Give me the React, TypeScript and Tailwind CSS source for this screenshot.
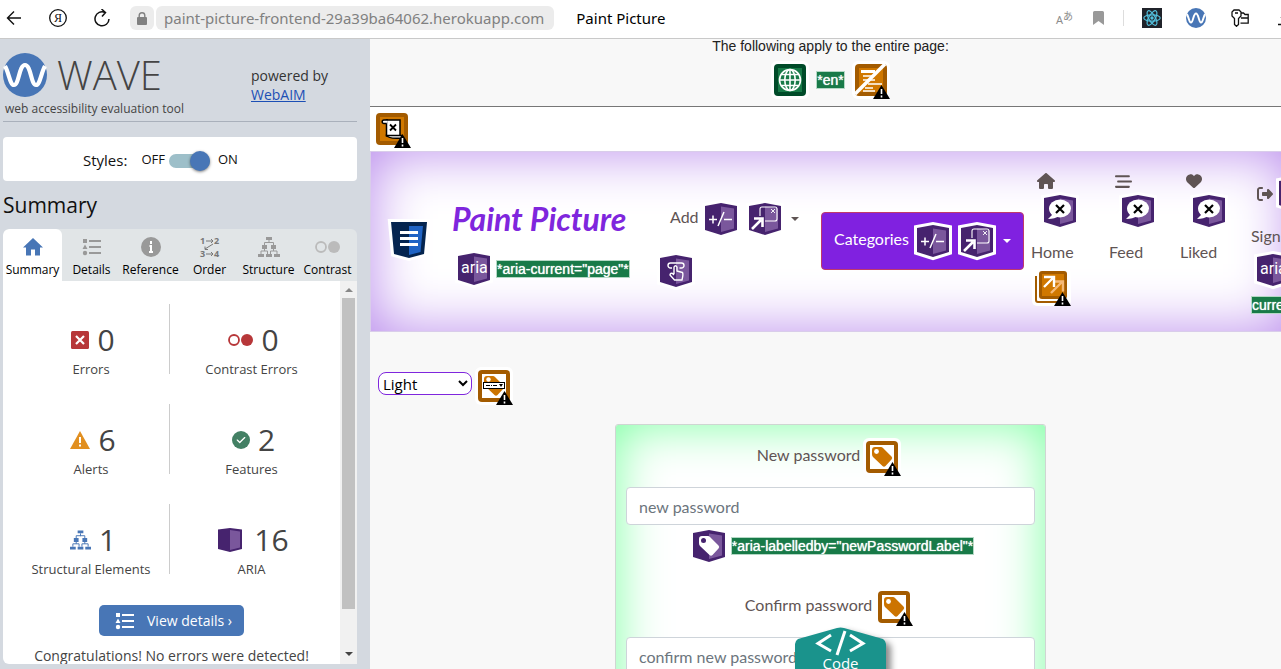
import React from "react";
import { FaHouse, FaBarsStaggered, FaHeart, FaRightFromBracket, FaCheck } from "react-icons/fa6";

type Kids = { children?: React.ReactNode };

function WaveMark({ className }: { className: string }) {
  return (
    <svg viewBox="0 0 44 44" className={className} aria-hidden="true">
      <circle cx="22" cy="22" r="22" fill="#4876b6" />
      <path
        d="M2 13 C6 20 7 32 11 32 C16 32 16 12 22 12 C28 12 28 32 33 32 C37 32 38 20 42 13"
        fill="none"
        stroke="#fff"
        strokeWidth="4.2"
      />
    </svg>
  );
}

/* Purple box used for every ARIA marker */
function Cube({ children }: Kids) {
  return (
    <svg viewBox="0 0 32 32" className="size-8 shrink-0 overflow-visible" aria-hidden="true">
      <path d="M0 3 16 0 32 3V27L16 32 0 27Z" fill="#fff" stroke="#fff" strokeWidth="6" strokeLinejoin="miter" />
      <path d="M0 3 16 0 32 3V27L16 32 0 27Z" fill="#46236e" />
      <path d="M16 3.5 29 5.5V25.5L16 29Z" fill="#7a579c" />
      {children}
    </svg>
  );
}

const AriaCube = () => (
  <Cube>
    <text x="3" y="20" fontSize="16" fill="#fff" fontFamily="Roboto, sans-serif">
      aria
    </text>
  </Cube>
);

const ExpandCube = () => (
  <Cube>
    <path d="M4 16.5h8M8 12.5v8M19 9 13 23M19 16.5h8" stroke="#fff" strokeWidth="1.5" fill="none" />
  </Cube>
);

const PopupCube = () => (
  <Cube>
    <path d="M11 13V6Q11 4 13 4H26Q28 4 28 6V16Q28 18 26 18H16" fill="none" stroke="#fff" strokeWidth="1.1" />
    <path d="M22 6l4 4M26 6l-4 4" stroke="#fff" strokeWidth=".9" />
    <path d="M3 26 12 17M5 15.5H13.5V24" stroke="#fff" strokeWidth="2.6" fill="none" />
  </Cube>
);

const HandCube = () => (
  <Cube>
    <path
      d="M12 13H10.500A2.500 2.500 0 0 1 10.500 8H21.500A2.500 2.500 0 0 1 21.500 13H19.500"
      fill="none"
      stroke="#fff"
      strokeWidth="1.4"
    />
    <path
      d="M14 19V12Q15.500 9.500 17 12V16L22.500 17.500Q23.500 19 22 25H14.500L10 20Q10.500 17.500 12.500 18.500L14 20"
      fill="none"
      stroke="#fff"
      strokeWidth="1.4"
      strokeLinejoin="round"
    />
  </Cube>
);

const HiddenCube = () => (
  <Cube>
    <ellipse cx="16" cy="13.500" rx="11" ry="9" fill="#fff" />
    <path d="M6 16 8 20 4 24Q11 24 15 21Z" fill="#fff" />
    <path d="M12 10l8 8M20 10l-8 8" stroke="#000" strokeWidth="2.2" />
  </Cube>
);

const tagPath = "M6 9Q6 6 9 6H15Q16 6 17 7L25.500 15.500Q27 17 25.500 18.500L19.500 25Q18 26.500 16.500 25L7 16Q6 15 6 13Z";

const TagCube = () => (
  <Cube>
    <path d={tagPath} fill="#fff" />
    <circle cx="10.500" cy="10.500" r="2.500" fill="#46236e" />
  </Cube>
);

/* Orange alert marker with the black warning triangle on its corner */
function Alert({ fill, children }: Kids & { fill: string }) {
  return (
    <svg viewBox="0 0 32 32" className="size-8 shrink-0 overflow-visible" aria-hidden="true">
      <rect x="-3" y="-3" width="38" height="38" rx="6" fill="#fff" />
      <rect width="32" height="32" rx="4" fill="#a35b00" />
      <rect x="4" y="4" width="24" height="24" fill={fill} />
      {children}
      <path d="M26.500 21 35 35H18Z" fill="#000" />
      <path d="M26.500 25v5M26.500 31.500v2" stroke="#fff" strokeWidth="1.600" />
    </svg>
  );
}

const TagAlert = () => (
  <Alert fill="#fff">
    <path d={tagPath} fill="#cc7400" />
    <circle cx="10.500" cy="10.500" r="2.400" fill="#fff" />
  </Alert>
);

const SelectAlert = () => (
  <Alert fill="#fff">
    <path d={tagPath} fill="#cc7400" />
    <circle cx="10.500" cy="9.500" r="2.200" fill="#fff" />
    <rect x="5.500" y="12.500" width="21" height="6" fill="#fff" stroke="#000" />
    <path d="M8 15.500h12" stroke="#000" strokeDasharray="4 1 1 1" />
    <path d="M21 14h4l-2 3z" />
  </Alert>
);

const Mark = ({ children }: Kids) => (
  <span className="whitespace-nowrap border border-[#b4d8c5] bg-[#187a48] font-['Liberation_Sans',Arial,sans-serif] text-sm leading-4 text-white [text-shadow:0_0_1px_#fff]">
    {children}
  </span>
);

const ListIcon = ({ className }: { className: string }) => (
  <svg viewBox="0 0 20 18" className={className} aria-hidden="true" fill="currentColor">
    <path d="M1 1h4v4H1zM3 6.500 5.500 11H.5z" />
    <circle cx="3" cy="15" r="2.200" />
    <path d="M7 2h12v2H7zM7 8h12v2H7zM7 14h12v2H7z" />
  </svg>
);

const TreeIcon = ({ className }: { className: string }) => (
  <svg viewBox="0 0 22 20" className={className} aria-hidden="true" fill="currentColor">
    <path d="M8 0h6v3H8zM4 8h5v4H4zM13 8h5v4h-5zM0 17h6v3H0zM8 17h6v3H8zM16 17h6v3h-6z" />
    <path d="M11 3v3M6.500 8V5.500h9V8M6.500 12v2M15.500 12v2M3 17v-3h6.500v3M12.500 17v-3H19v3" fill="none" stroke="currentColor" />
  </svg>
);

const HomeIcon = () => (
  <svg viewBox="0 0 20 18" className="h-[18px] w-5" fill="#4876b6" aria-hidden="true">
    <path d="M10 0 20 9.500H17V17.500H12V11.500H8V17.500H3V9.500H0Z" />
  </svg>
);

const InfoIcon = () => (
  <svg viewBox="0 0 20 20" className="size-5" aria-hidden="true">
    <circle cx="10" cy="10" r="10" fill="#999" />
    <path d="M10 4v3M8.500 9H10v5.500M8 15h4" stroke="#fff" strokeWidth="2" fill="none" />
  </svg>
);

const OrderIcon = () => (
  <svg viewBox="0 0 20 20" className="size-5 overflow-visible" aria-hidden="true" fill="#777">
    <g fontSize="9" fontWeight="700" fontFamily="Open Sans, sans-serif">
      <text x="0" y="7">1</text>
      <text x="14" y="7">2</text>
      <text x="0" y="20">3</text>
      <text x="14" y="20">4</text>
    </g>
    <path d="M6 4h7M11 2l2 2-2 2M6 17h7M11 15l2 2-2 2M13 7 5 12M5 9.500V12.500H8" fill="none" stroke="#777" />
  </svg>
);

const CirclesIcon = ({ className }: { className: string }) => (
  <svg viewBox="0 0 25 12" className={className} aria-hidden="true">
    <circle cx="6" cy="6" r="5" fill="none" stroke="currentColor" strokeWidth="1.800" />
    <circle cx="19" cy="6" r="6" fill="currentColor" />
  </svg>
);

const ErrorIcon = () => (
  <svg viewBox="0 0 18 18" className="size-[18px]" aria-hidden="true">
    <rect width="18" height="18" rx="1.500" fill="#b73739" />
    <path d="M5 5l8 8M13 5l-8 8" stroke="#fff" strokeWidth="2.200" />
  </svg>
);

const AlertIcon = () => (
  <svg viewBox="0 0 20 18" className="h-[18px] w-5" aria-hidden="true">
    <path d="M10 0 20 18H0Z" fill="#e18f20" />
    <path d="M10 6v6M10 13.500v2" stroke="#fff" strokeWidth="2" />
  </svg>
);

const CheckIcon = () => (
  <span className="flex size-[18px] items-center justify-center rounded-full bg-[#438064]">
    <FaCheck className="size-[10px] text-white" />
  </span>
);

const BoxIcon = () => (
  <svg viewBox="0 0 24 24" className="size-6" aria-hidden="true">
    <path d="M0 1.500 12 0 24 1.500V21L12 24 0 21Z" fill="#46236e" />
    <path d="M12 2 22 3.500V19.500L12 22Z" fill="#7a579c" />
  </svg>
);

const tabs = [
  { label: "Summary", icon: <HomeIcon /> },
  { label: "Details", icon: <ListIcon className="h-[18px] w-5 text-[#999]" /> },
  { label: "Reference", icon: <InfoIcon /> },
  { label: "Order", icon: <OrderIcon /> },
  { label: "Structure", icon: <TreeIcon className="h-5 w-[22px] text-[#999]" /> },
  { label: "Contrast", icon: <CirclesIcon className="h-3 w-[25px] text-[#bbb]" /> },
];

const stats = [
  { label: "Errors", value: 0, icon: <ErrorIcon /> },
  { label: "Contrast Errors", value: 0, icon: <CirclesIcon className="h-3 w-[25px] text-[#b73739]" /> },
  { label: "Alerts", value: 6, icon: <AlertIcon /> },
  { label: "Features", value: 2, icon: <CheckIcon /> },
  { label: "Structural Elements", value: 1, icon: <TreeIcon className="h-5 w-[21px] text-[#4876b6]" /> },
  { label: "ARIA", value: 16, icon: <BoxIcon /> },
];

function BrowserBar() {
  return (
    <header className="flex h-[39px] shrink-0 items-center overflow-hidden border-b border-[#c9c9c9] bg-white pb-0.5 pl-1.5">
      <button aria-label="Back" className="w-4">
        <svg viewBox="0 0 16 16" className="size-4" fill="none" stroke="#111" strokeWidth="1.400">
          <path d="M15 8H1.500M8 1.500 1.500 8 8 14.500" />
        </svg>
      </button>
      <button aria-label="Yandex" className="ml-[27px] w-[18px]">
        <svg viewBox="0 0 18 18" className="size-[18px]">
          <circle cx="9" cy="9" r="8.300" fill="none" stroke="#111" strokeWidth="1.300" />
          <text x="5" y="13" fontSize="12" fontFamily="Liberation Serif, serif" fill="#111">Я</text>
        </svg>
      </button>
      <button aria-label="Reload" className="ml-[26px] w-[18px]">
        <svg viewBox="0 0 18 18" className="size-[18px]" fill="none" stroke="#111" strokeWidth="1.500">
          <path d="M12 3.500A7 7 0 1 0 16 10M8.500 0 12.500 3.500 9 7.500" />
        </svg>
      </button>
      <span className="ml-[19px] flex size-6 shrink-0 items-center justify-center rounded-md bg-[#ececec]">
        <svg viewBox="0 0 10 13" className="h-[13px] w-[10px]" aria-hidden="true">
          <rect y="5" width="10" height="8" rx="1" fill="#808080" />
          <path d="M2.200 6V3.500a2.800 2.800 0 0 1 5.600 0V6" fill="none" stroke="#808080" strokeWidth="1.400" />
        </svg>
      </span>
      <span className="ml-0.5 flex h-6 items-center rounded-md bg-[#ececec] pl-2 pr-2.5 text-[15px] text-[#808080]">
        paint-picture-frontend-29a39ba64062.herokuapp.com
      </span>
      <span className="ml-[22px] text-[15px] text-black">Paint Picture</span>
      <div className="-mr-3 ml-auto flex shrink-0 items-center">
        <span className="flex w-[17px] items-start text-[#8c8c8c]">
          <span className="pt-1 text-[11px] leading-3">A</span>
          <span className="font-['Noto_Sans_CJK_JP',sans-serif] text-[10px] leading-3">あ</span>
        </span>
        <svg viewBox="0 0 11 14" className="ml-5 h-[14px] w-[11px]" fill="#999" aria-hidden="true">
          <path d="M0 1.500Q0 0 1.500 0H9.500Q11 0 11 1.500V14L5.500 10 0 14Z" />
        </svg>
        <span className="ml-[19px] h-4 w-px bg-[#ddd]" />
        <svg viewBox="0 0 20 20" className="ml-[18px] size-5" aria-hidden="true">
          <rect width="20" height="20" fill="#20232a" />
          <circle cx="10" cy="10" r="1.700" fill="#53c1de" />
          <g fill="none" stroke="#53c1de" strokeWidth="1.200">
            <ellipse cx="10" cy="10" rx="8.200" ry="3.200" />
            <ellipse cx="10" cy="10" rx="8.200" ry="3.200" transform="rotate(60 10 10)" />
            <ellipse cx="10" cy="10" rx="8.200" ry="3.200" transform="rotate(120 10 10)" />
          </g>
        </svg>
        <WaveMark className="ml-6 size-5" />
        <svg viewBox="0 0 18 18" className="ml-[25px] size-[18px]" fill="none" stroke="#111" strokeWidth="1.300" aria-hidden="true">
          <path d="M3.500 9.500 1 7V3L3 1H8L10 3V7L7.500 9.500V15.500L5.500 17.300 3.500 15.500ZM4 4h3" />
          <path d="M10 4h2.500l1.500 1.500h3.200V14.200H9.500M10 9h7" />
        </svg>
        <svg viewBox="0 0 16 16" className="ml-[28px] size-4" fill="none" stroke="#111" strokeWidth="1.400" aria-hidden="true">
          <path d="M8 1v9M4 7l4 4 4-4M1 14.500h14" />
        </svg>
      </div>
    </header>
  );
}

function Sidebar() {
  return (
    <aside className="flex w-[370px] shrink-0 flex-col bg-[#d4d9e0] pb-[5px] pl-[3px] pr-[13px] font-['Open_Sans','Noto_Sans',sans-serif]">
      <div className="flex h-[83px] items-start justify-between border-b border-[#a9b0bb] pt-3.5">
        <div>
          <div className="flex h-11 items-center gap-2.5">
            <WaveMark className="size-11" />
            <span className="text-[40px] font-light leading-[44px] text-[#444]">WAVE</span>
          </div>
          <p className="mt-[3px] pl-0.5 text-xs leading-[18px] text-[#444]">web accessibility evaluation tool</p>
        </div>
        <p className="w-[106px] pt-[13px] text-sm leading-[19px] text-[#333]">
          powered by
          <br />
          <a href="#webaim" className="text-[#1c4fb5] underline">
            WebAIM
          </a>
        </p>
      </div>
      <label className="mt-[15px] flex h-11 shrink-0 items-center rounded-[4px] bg-white pl-20 pt-0.5 text-[15px] text-[#111]">
        Styles:
        <span className="ml-3.5 text-[13px]">OFF</span>
        <input type="checkbox" role="switch" defaultChecked className="peer sr-only" />
        <span className="ml-1 mr-2 mt-0.5 flex h-3.5 w-[41px] items-center justify-end rounded-full bg-[#9dbfc9]">
          <span className="size-5 rounded-full bg-[#4876b6] shadow-[0_1px_3px_rgba(0,0,0,0.5)]" />
        </span>
        <span className="text-[13px]">ON</span>
      </label>
      <h2 className="mb-[9px] mt-[9px] text-[21px] leading-[30px] text-[#111]">Summary</h2>
      <div role="tablist" className="grid h-[52px] shrink-0 grid-cols-6 overflow-hidden rounded-t-md bg-[#e1e5e7]">
        {tabs.map((t, i) => (
          <button
            key={t.label}
            role="tab"
            aria-selected={i === 0}
            className="flex flex-col items-center rounded-t-md pt-1.5 text-xs leading-[18px] text-black aria-selected:bg-white"
          >
            <span className="flex h-6 items-center">{t.icon}</span>
            <span className="mt-0.5">{t.label}</span>
          </button>
        ))}
      </div>
      <div className="flex min-h-0 flex-1 overflow-hidden rounded-bl-md bg-white">
        <div className="min-w-0 flex-1 overflow-hidden pt-[23px] text-[#444]">
          <dl className="grid grid-cols-[157fr_163fr] gap-y-[30px] pl-2.5 pr-[7px]">
            {stats.map((s) => (
              <div
                key={s.label}
                className="flex h-[70px] flex-col items-center border-[#ccc] pt-4 odd:border-r"
              >
                <dd className="flex h-10 items-center gap-2 pl-1 text-[30px] leading-10">
                  {s.icon}
                  <span className={s.value === 16 ? "pl-1" : ""}>{s.value}</span>
                </dd>
                <dt className="whitespace-nowrap text-[13px] leading-[18px]">{s.label}</dt>
              </div>
            ))}
          </dl>
          <button className="mx-auto mt-[31px] flex h-[31px] w-[145px] items-center gap-3 rounded-[5px] bg-[#4876b6] pl-4 text-sm text-white">
            <ListIcon className="h-[18px] w-5" />
            View details ›
          </button>
          <p className="mt-2.5 whitespace-nowrap text-center text-sm leading-5">Congratulations! No errors were detected!</p>
        </div>
        <div className="flex w-[17px] flex-col items-center bg-[#f1f1f1]">
          <span className="mt-[7px] border-x-4 border-b-4 border-x-transparent border-b-[#888]" />
          <span className="mt-1.5 h-[311px] w-[13px] bg-[#c1c1c1]" />
          <span className="mb-2 mt-auto border-x-4 border-t-4 border-x-transparent border-t-[#444]" />
        </div>
      </div>
    </aside>
  );
}

const Caret = () => <span className="border-x-4 border-t-4 border-x-transparent border-t-current" />;

function NavItem({ icon, label, children }: Kids & { icon: React.ReactNode; label: string }) {
  return (
    <li className="w-[71px] shrink-0 pt-5 first:w-[78px]">
      <a href={`#${label.toLowerCase()}`} className="flex flex-col">
        <span className="ml-1.5 flex h-[18px] items-center">{icon}</span>
        <span className="ml-[13px] mt-[5px]">
          <HiddenCube />
        </span>
        <span className="mt-[13px] leading-6">{label}</span>
      </a>
      {children}
    </li>
  );
}

function SiteNav() {
  return (
    <nav className="flex h-[181px] items-start border border-[#d9cdea] bg-white pl-5 text-base text-[#5f5454] shadow-[inset_0_0_56px_#b889ec]">
      <svg viewBox="0 0 36 36" className="mt-[70px] size-9 shrink-0 overflow-visible" aria-hidden="true">
        <path d="M0 0H36L33 32 18 36 3 32Z" fill="#fff" stroke="#fff" strokeWidth="6" />
        <path d="M0 0H36L33 32 18 36 3 32Z" fill="#04244f" />
        <path d="M18 4H32L29.500 30 18 33Z" fill="#1f63c4" />
        <path d="M9 9H27V12H9ZM9 15H27V18H9ZM9 21H27V24H9Z" fill="#fff" />
      </svg>
      <div className="ml-[25px] w-[178px] shrink-0 pt-[47px]">
        <a href="#top" className="whitespace-nowrap text-[32px] font-bold italic leading-10 text-[#7f26dd]">
          Paint Picture
        </a>
        <div className="mt-3.5 flex items-center gap-1.5 pl-1.5">
          <AriaCube />
          <Mark>*aria-current="page"*</Mark>
        </div>
      </div>
      <div className="ml-[30px] w-[139px] shrink-0 pt-[51px]">
        <button className="flex items-center pl-2.5">
          <span className="mr-1.5 pb-1">Add</span>
          <ExpandCube />
          <span className="w-3" />
          <PopupCube />
          <span className="w-2.5" />
          <Caret />
        </button>
        <div className="mt-5">
          <HandCube />
        </div>
      </div>
      <button className="ml-[22px] mt-[60px] flex h-[58px] w-[203px] shrink-0 items-center rounded-[4px] border border-[#c0396b] bg-[#8021e0] pl-3 text-white">
        <span className="mr-2 pb-1">Categories</span>
        <ExpandCube />
        <span className="w-3" />
        <PopupCube />
        <span className="w-2.5" />
        <Caret />
      </button>
      <ul className="ml-[7px] flex">
        <NavItem label="Home" icon={<FaHouse className="size-[18px]" />}>
          <div className="mt-[7px] pl-1.5">
            <svg viewBox="0 0 32 32" className="size-8 overflow-visible" aria-hidden="true">
              <rect x="-5" y="-3" width="39" height="38" rx="5" fill="#fff" />
              <path d="M-1 5V29Q-1 31 1 31H26" fill="none" stroke="#a35b00" strokeWidth="2" />
              <rect x="2" y="0" width="28" height="28" rx="3" fill="#a35b00" />
              <rect x="5" y="3" width="22" height="22" fill="#d07800" />
              <path d="M14 22 25 11M16 10.500h10v10" fill="none" stroke="#f5b978" strokeWidth="2.400" />
              <path d="M7 16 16 7M7 6h10v10" fill="none" stroke="#fff" strokeWidth="2.400" />
              <path d="M25.500 21 34 35H17Z" />
              <path d="M25.500 25v5M25.500 31.500v2" stroke="#fff" strokeWidth="1.600" />
            </svg>
          </div>
        </NavItem>
        <NavItem label="Feed" icon={<FaBarsStaggered className="size-[17px]" />} />
        <NavItem label="Liked" icon={<FaHeart className="size-4" />} />
        <li className="w-10 shrink-0 pt-[26px]">
          <a href="#sign-out" className="flex w-20 flex-col">
            <span className="ml-1.5 flex h-8 items-center gap-1.5">
              <FaRightFromBracket className="size-4 shrink-0" />
              <HiddenCube />
            </span>
            <span className="mt-3.5 leading-6">Sign out</span>
          </a>
          <div className="mt-1.5 pl-1.5">
            <AriaCube />
          </div>
          <div className="mt-1.5 leading-6">
            <Mark>current="page"*</Mark>
          </div>
        </li>
      </ul>
    </nav>
  );
}

function Field({ id, label, placeholder, mark }: { id: string; label: string; placeholder: string; mark: string }) {
  return (
    <div className="flex h-[150px] flex-col">
      <div className="flex items-center justify-center gap-1.5 pr-1.5">
        <label htmlFor={id} className="-mt-1 leading-6">
          {label}
        </label>
        <TagAlert />
      </div>
      <input
        id={id}
        type="text"
        placeholder={placeholder}
        className="mt-3.5 h-[38px] shrink-0 rounded-[4px] border border-[#ced4da] bg-white px-3 text-base placeholder:text-[#6c757d]"
      />
      <div className="mt-[5px] flex items-center justify-center gap-1.5 pl-1.5">
        <TagCube />
        <Mark>{mark}</Mark>
      </div>
    </div>
  );
}

function EvaluatedPage() {
  return (
    <main className="relative min-w-0 flex-1 overflow-hidden bg-[#f8f8f8]">
      <div className="-mr-2.5 font-[Lato,sans-serif] text-base text-[#5f5454]">
        <div className="h-[68px] border-b border-[#777] text-center font-['Liberation_Sans',Arial,sans-serif] text-sm leading-4 text-[#222]">
          <p className="leading-[14px]">The following apply to the entire page:</p>
          <div className="mt-[11px] flex items-center justify-center gap-2.5">
            <svg viewBox="0 0 32 32" className="size-8 overflow-visible" aria-hidden="true">
              <rect x="-3" y="-3" width="38" height="38" rx="6" fill="#fff" />
              <rect width="32" height="32" rx="4" fill="#004b29" />
              <rect x="4" y="4" width="24" height="24" fill="#187a48" />
              <g fill="none" stroke="#fff" strokeWidth="1.600">
                <circle cx="16" cy="16" r="10.500" />
                <ellipse cx="16" cy="16" rx="5.200" ry="10.500" />
                <path d="M16 5.500v21M5.500 16h21M7.500 10.500h17M7.500 21.500h17" />
              </g>
            </svg>
            <Mark>*en*</Mark>
            <Alert fill="#d07800">
              <path d="M6 7.500h14" stroke="#fff" strokeWidth="3" />
              <path d="M8 12h10M8 16h12M13 20h14M10 24h8M8 27h12" stroke="#fff" strokeWidth="1.700" />
              <path d="M0 30 30 0" stroke="#fff" strokeWidth="3.500" />
            </Alert>
          </div>
        </div>
        <div className="h-11 bg-white pl-1.5 pt-1.5">
          <Alert fill="#d07800">
            <path d="M10.500 7H24V23H10.500Z" fill="#fff" stroke="#000" strokeWidth="1.500" />
            <path d="M12 7H8a1.800 1.800 0 0 0 0 3.600H10.500" fill="#fff" stroke="#000" strokeWidth="1.500" />
            <path d="M14 11.500l6 6M20 11.500l-6 6" stroke="#000" strokeWidth="1.800" />
            <path d="M10.500 22.500h15v2.500q-13 1-15-2.500Z" stroke="#000" strokeWidth="1.400" fill="#fff" />
          </Alert>
        </div>
        <SiteNav />
        <div className="mt-[38px] flex items-start pl-2">
          <select
            aria-label="Theme"
            className="mt-0.5 h-[23px] w-[94px] rounded-lg border border-[#7f26dd] bg-white font-['Open_Sans',sans-serif] text-[15px] leading-5 text-black"
          >
            <option>Light</option>
            <option>Dark</option>
          </select>
          <span className="ml-1.5">
            <SelectAlert />
          </span>
        </div>
        <form className="mx-auto mt-[22px] w-[431px] rounded-[3px] border border-[#cfd6d2] bg-white px-2.5 pt-4 shadow-[inset_0_0_50px_#7dffa2]">
          <Field id="new-password" label="New password" placeholder="new password" mark={'*aria-labelledby="newPasswordLabel"*'} />
          <Field id="confirm-password" label="Confirm password" placeholder="confirm new password" mark={'*aria-labelledby="confirmPasswordLabel"*'} />
        </form>
      </div>
      <button className="absolute bottom-0 left-[425px] h-[42px] w-[91px] font-['Open_Sans',sans-serif] text-[15px] text-white">
        <svg viewBox="0 0 91 42" className="absolute inset-0 h-[42px] w-[91px] overflow-visible [filter:drop-shadow(5px_4px_3px_rgba(0,0,0,0.45))]" aria-hidden="true">
          <path d="M0 17Q0 14 3 12L42 1Q45.500 0 49 1L88 12Q91 14 91 17V60H0Z" fill="#1a938c" />
          <path d="M36 8 23 16.500 36 24M55 8 68 16.500 55 24M50 4 42 28" fill="none" stroke="#fff" strokeWidth="3" />
        </svg>
        <span className="relative block pt-[26px] leading-5">Code</span>
      </button>
    </main>
  );
}

export default function App() {
  return (
    <div className="flex h-screen flex-col overflow-hidden font-['Noto_Sans','Open_Sans',sans-serif]">
      <BrowserBar />
      <div className="flex min-h-0 flex-1">
        <Sidebar />
        <EvaluatedPage />
      </div>
    </div>
  );
}
